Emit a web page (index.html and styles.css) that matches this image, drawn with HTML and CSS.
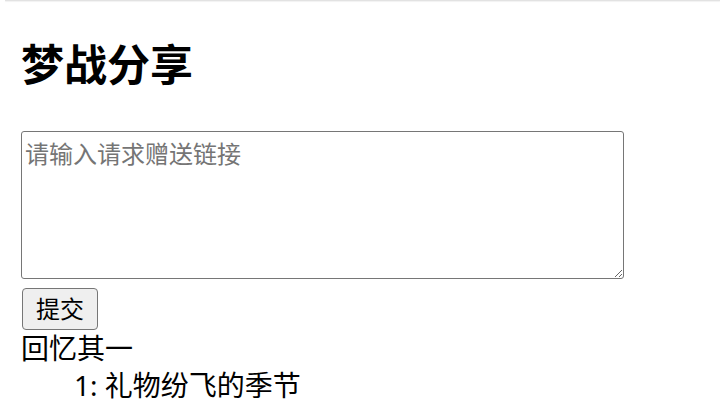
FILE: index.html
```html
<!DOCTYPE html>
<html lang="zh-CN">
<head>
<meta charset="utf-8">
<title>梦战分享</title>
<link rel="stylesheet" href="styles.css">
</head>
<body>
<div class="topline"></div>
<main class="page">
  <h1 class="title">梦战分享</h1>
  <form class="share-form">
    <textarea class="link-input" placeholder="请输入请求赠送链接"></textarea>
    <button type="button" class="submit-btn">提交</button>
  </form>
  <div class="memory">
    <div class="memory-title">回忆其一</div>
    <div class="memory-item">1: 礼物纷飞的季节</div>
  </div>
</main>
</body>
</html>
```
FILE: styles.css
```css
html, body {
  margin: 0;
  padding: 0;
  background: #ffffff;
}
body {
  font-family: "Noto Sans", "Noto Sans CJK SC", sans-serif;
  color: #000000;
}
.topline {
  height: 1px;
  margin-left: 5px;
  background: #e2e2e2;
  box-shadow: 0 1px 1px rgba(0, 0, 0, 0.06);
}
.page {
  padding-left: 21px;
}
.title {
  margin: 42px 0 45px 0;
  font-size: 43px;
  line-height: 43px;
  font-weight: bold;
}
.share-form {
  display: flex;
  flex-direction: column;
  align-items: flex-start;
}
.link-input {
  box-sizing: border-box;
  width: 603px;
  height: 148px;
  margin: 0 0 9px 0;
  padding: 3px;
  border: 1.5px solid #767676;
  border-radius: 3px;
  font-family: "Noto Sans", "Noto Sans CJK SC", sans-serif;
  font-size: 24px;
  color: #000;
}
.link-input::placeholder {
  color: #757575;
}
.submit-btn {
  box-sizing: border-box;
  width: 76px;
  height: 42px;
  margin-left: 1px;
  padding: 0;
  border: 1.5px solid #767676;
  border-radius: 4px;
  background: #efefef;
  font-family: "Noto Sans", "Noto Sans CJK SC", sans-serif;
  font-size: 24px;
  line-height: 1;
  color: #000;
}
.memory {
  font-size: 28px;
  line-height: 37px;
}
.memory-item {
  padding-left: 53px;
}
```
